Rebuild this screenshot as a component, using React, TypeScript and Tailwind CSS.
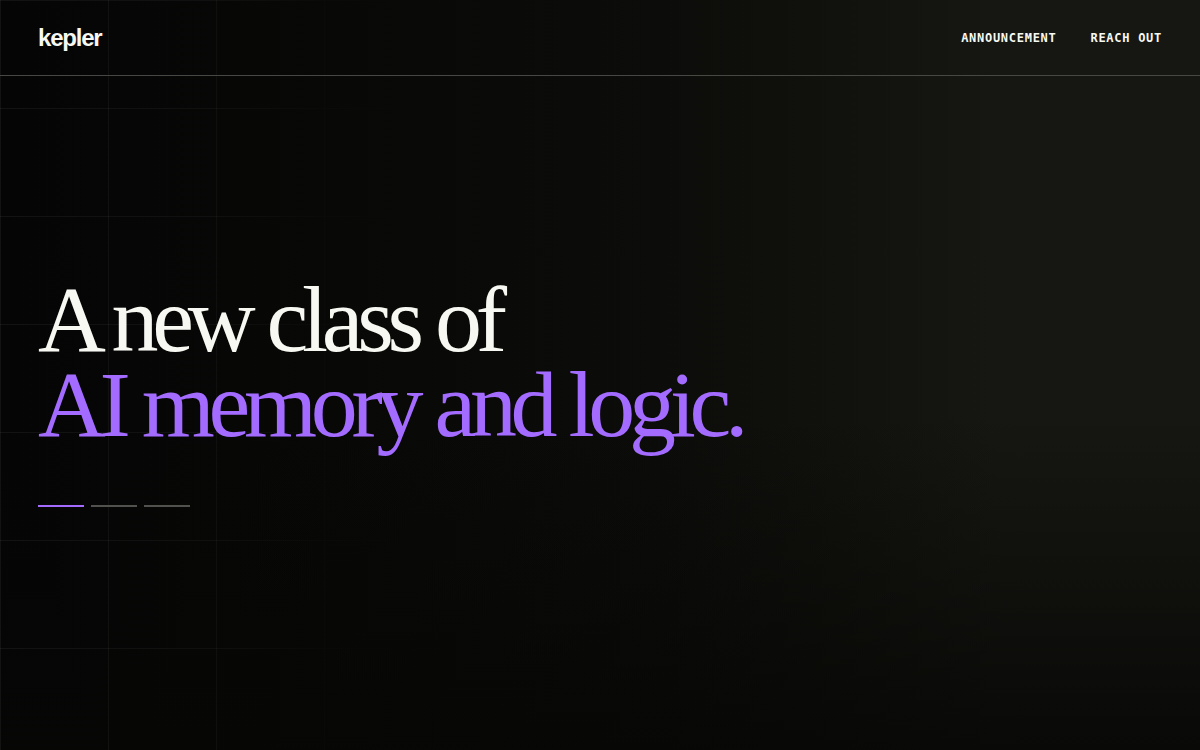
import React, { useState } from 'react';
import clsx from 'clsx';

const links = [
  { label: 'Announcement', href: '#announcement' },
  { label: 'Reach out', href: '#contact' },
];

const slides = [
  { lead: 'A new class of', accent: 'AI memory and logic.' },
  { lead: 'A new class of', accent: 'AI memory and logic.' },
  { lead: 'A new class of', accent: 'AI memory and logic.' },
];

const Backdrop = () => (
  <div className="absolute inset-0 -z-10 overflow-hidden" aria-hidden="true">
    <div className="absolute inset-0 bg-[linear-gradient(90deg,#050506_0%,#070706_20%,#0a0a08_42%,#0c0c0a_55%,#11120d_70%,#161712_83%,#161712_100%)]" />
    <div className="absolute inset-0 bg-[linear-gradient(180deg,transparent_55%,rgba(6,6,5,0.8)_100%)]" />
    {/* grid lines, faded out to the right */}
    <div className="absolute inset-0 bg-[linear-gradient(90deg,rgba(247,248,242,0.06)_1px,transparent_1px),linear-gradient(180deg,rgba(247,248,242,0.06)_1px,transparent_1px)] bg-[size:108px_108px] [mask-image:linear-gradient(90deg,black_0%,rgba(0,0,0,0.7)_18%,rgba(0,0,0,0.2)_27%,transparent_38%)]" />
  </div>
);

const Header = () => (
  <header className="flex h-19 items-center justify-between border-b border-[#474843] px-[38px]">
    <a href="#top" className="text-2xl font-bold tracking-tighter">
      kepler
    </a>
    <nav className="flex gap-[34px] font-['DejaVu_Sans_Mono',monospace] text-xs font-bold uppercase tracking-[0.06em]">
      {links.map((link) => (
        <a key={link.href} href={link.href} className="hover:text-[#a36bff]">
          {link.label}
        </a>
      ))}
    </nav>
  </header>
);

export default function App() {
  const [active, setActive] = useState(0);
  const slide = slides[active];

  return (
    <div
      id="top"
      className="relative isolate flex min-h-screen flex-col bg-[#050505] font-['Liberation_Sans',Arial,sans-serif] text-[#f7f8f2]"
    >
      <Backdrop />
      <Header />
      <main className="flex flex-1 flex-col justify-center px-[38px] pb-[42px]">
        <h1 className="font-['Liberation_Serif',serif] text-[94px] leading-[85px] tracking-[-0.067em]">
          <span className="block">{slide.lead}</span>
          <span className="block text-[#a36bff]">{slide.accent}</span>
        </h1>
        <div className="mt-[58px] flex gap-[7px]">
          {slides.map((_, i) => (
            <button
              key={i}
              type="button"
              aria-label={`Slide ${i + 1}`}
              onClick={() => setActive(i)}
              className={clsx('h-0.5 w-[46px]', i === active ? 'bg-[#a36bff]' : 'bg-[#51514e]')}
            />
          ))}
        </div>
      </main>
    </div>
  );
}
